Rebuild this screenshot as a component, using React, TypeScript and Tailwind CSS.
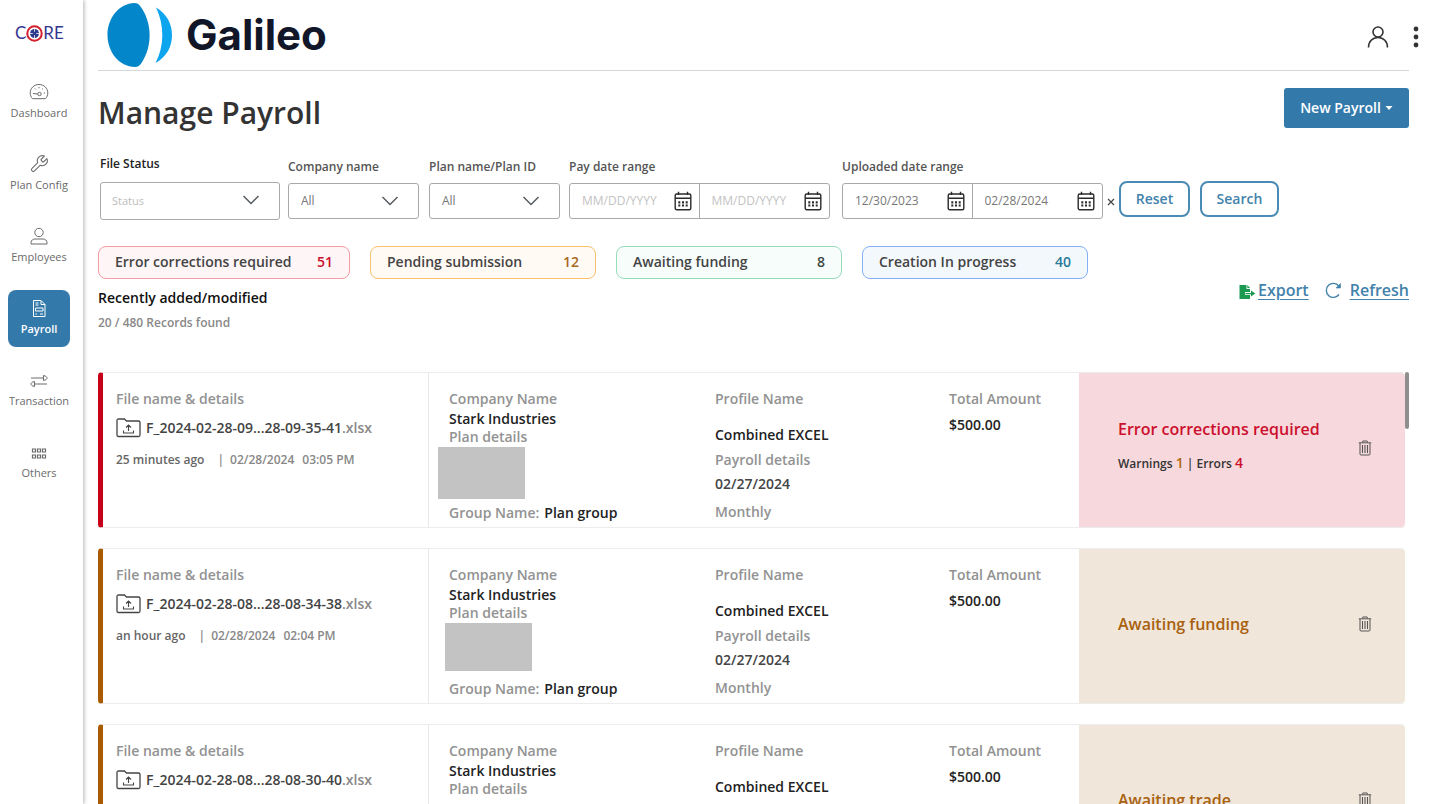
import React, { useState } from "react";
import type { ReactNode } from "react";

type IconProps = { className?: string };

function GalileoMark({ className }: IconProps) {
  return (
    <svg viewBox="0 0 66 66" className={className} aria-hidden="true">
      <path
        d="M27.5 1C30 1 32 2 33.500 4.500C45 20 46 44 34.500 61C32.500 63.500 31 65 28 65C12 64.500 .5 50 .5 33C.5 16 12 1.500 27.500 1Z"
        fill="#0386ca"
      />
      <path
        d="M49 5.500C60 12 65 22 65 33C65 44.500 60 54.500 48.500 61C57.500 44.500 57.500 23 49 5.500Z"
        fill="#0ea5ef"
      />
    </svg>
  );
}

function CoreTarget({ className }: IconProps) {
  return (
    <svg viewBox="0 0 16 16" className={className} aria-hidden="true">
      <circle cx="8" cy="8" r="6.8" fill="#fff" stroke="#d3202c" strokeWidth="1.900" />
      <circle cx="8" cy="8" r="4.200" fill="#2f3a8c" />
      <path d="M8 3.300V12.700M3.300 8H12.700" stroke="#fff" strokeWidth=".7" />
      <circle cx="8" cy="8" r="1.600" fill="#2f3a8c" />
    </svg>
  );
}

function GaugeIcon({ className }: IconProps) {
  return (
    <svg viewBox="0 0 20 20" className={className} fill="none" stroke="currentColor" aria-hidden="true">
      <path d="M3.500 16.700C2 15.200 1.200 13 1.200 11C1.200 6.200 5 2.500 10 2.500C15 2.500 18.800 6.200 18.800 11C18.800 13 18 15.200 16.500 16.700Z" />
      <circle cx="10.500" cy="12" r="1.700" />
      <path d="M4 11.500L8.800 12" strokeWidth="1.200" />
      <path d="M10 5V6.300M6 6.500L6.900 7.400M14 6.500L13.100 7.400M16 11H14.800" />
    </svg>
  );
}

function WrenchIcon({ className }: IconProps) {
  return (
    <svg viewBox="0 0 24 24" className={className} fill="none" stroke="currentColor" strokeWidth="1.300" strokeLinejoin="round" aria-hidden="true">
      <path d="M14.700 6.300a1 1 0 0 0 0 1.400l1.600 1.600a1 1 0 0 0 1.400 0l3.770-3.770a6 6 0 0 1-7.940 7.940l-6.910 6.910a2.120 2.120 0 0 1-3-3l6.910-6.910a6 6 0 0 1 7.940-7.940z" />
    </svg>
  );
}

function PersonIcon({ className }: IconProps) {
  return (
    <svg viewBox="0 0 20 20" className={className} fill="none" stroke="currentColor" aria-hidden="true">
      <circle cx="10" cy="6.500" r="4.200" />
      <path d="M2 18V16.500C2 14.300 4 13 6 13H14C16 13 18 14.300 18 16.500V18Z" />
    </svg>
  );
}

function PayrollIcon({ className }: IconProps) {
  return (
    <svg viewBox="0 0 20 20" className={className} fill="none" stroke="currentColor" aria-hidden="true">
      <path d="M4.500 2.500H12L16 6.500V18.500H4.500Z" />
      <path d="M12 2.500V6.500H16M6.500 5H9.500M6.500 7H9.500M6.500 10H14V13H6.500ZM6.500 16H8M11 16H14" />
    </svg>
  );
}

function TransferIcon({ className }: IconProps) {
  return (
    <svg viewBox="0 0 20 20" className={className} fill="none" stroke="currentColor" aria-hidden="true">
      <path d="M2 8H14.500M14.500 5.500V10.500C17 10 18 9 18 8C18 7 17 6 14.500 5.500ZM18 14H5.500M5.500 11.500V16.500C3 16 2 15 2 14C2 13 3 12 5.500 11.500Z" />
    </svg>
  );
}

function GridIcon({ className }: IconProps) {
  return (
    <svg viewBox="0 0 20 20" className={className} fill="none" stroke="currentColor" strokeWidth="1.200" aria-hidden="true">
      <path d="M3.500 7H6.500V10H3.500ZM8.500 7H11.500V10H8.500ZM13.500 7H16.500V10H13.500ZM3.500 13H6.500V16H3.500ZM8.500 13H11.500V16H8.500ZM13.500 13H16.500V16H13.500Z" />
    </svg>
  );
}

function ChevronIcon({ className }: IconProps) {
  return (
    <svg viewBox="0 0 18 18" className={className} fill="none" stroke="#555b60" strokeWidth="1.500" aria-hidden="true">
      <path d="M1.500 5L9 12.500L16.500 5" />
    </svg>
  );
}

function CalendarIcon({ className }: IconProps) {
  return (
    <svg viewBox="0 0 18 20" className={className} fill="none" stroke="#2b2b2b" strokeWidth="1.400" aria-hidden="true">
      <rect x="1.200" y="3" width="15.600" height="15.800" rx="1.500" />
      <path d="M1.200 7.300H16.800M4.500 .8V4M13.500 .8V4" />
      <path d="M4.300 11.300H6.300M8 11.300H10M11.700 11.300H13.700M4.300 14.500H6.300M8 14.500H10M11.700 14.500H13.700" strokeWidth="2.200" />
    </svg>
  );
}

function FolderUploadIcon({ className }: IconProps) {
  return (
    <svg viewBox="0 0 25 20" className={className} fill="none" stroke="#444" strokeWidth="1.300" aria-hidden="true">
      <path d="M1 17V2.500C1 1.500 1.500 1 2.500 1H8.500L10.500 3H22.500C23.500 3 24 3.500 24 4.500V17C24 18 23.500 18.500 22.500 18.500H2.500C1.500 18.500 1 18 1 17Z" />
      <path d="M12.500 13V7.500M10 9.500L12.500 7L15 9.500M7.500 12.500V15H17.500V12.500" strokeWidth="1.100" />
    </svg>
  );
}

function TrashIcon({ className }: IconProps) {
  return (
    <svg viewBox="0 0 14 16" className={className} fill="none" stroke="#555" aria-hidden="true">
      <path d="M.8 2.800H13.200M4.800 2.500V1H9.200V2.500M2 3V14C2 14.700 2.400 15 3 15H11C11.600 15 12 14.700 12 14V3" />
      <path d="M4.500 5V13M7 5V13M9.500 5V13" strokeWidth="1.100" />
    </svg>
  );
}

function ExportIcon({ className }: IconProps) {
  return (
    <svg viewBox="0 0 17 16" className={className} aria-hidden="true">
      <path d="M.5 1H7.500V5H11V8H6V11H11V15H.5Z" fill="#1d9a52" />
      <path d="M8.300 1L11 4H8.300Z" fill="#1d9a52" />
      <path d="M6.500 9H12V6.500L16.300 9.600L12 12.500V10.200H6.500Z" fill="#1d9a52" />
    </svg>
  );
}

function RefreshIcon({ className }: IconProps) {
  return (
    <svg viewBox="0 0 17 17" className={className} fill="none" stroke="currentColor" strokeWidth="1.400" aria-hidden="true">
      <path d="M14 12.500A7 7 0 1 1 13.800 4" />
      <path d="M15.500 1.500V6H11Z" fill="currentColor" strokeWidth=".6" />
    </svg>
  );
}

const navItems = [
  { label: "Dashboard", Icon: GaugeIcon },
  { label: "Plan Config", Icon: WrenchIcon },
  { label: "Employees", Icon: PersonIcon },
  { label: "Payroll", Icon: PayrollIcon },
  { label: "Transaction", Icon: TransferIcon },
  { label: "Others", Icon: GridIcon },
];

function Sidebar() {
  return (
    <aside className="z-10 flex w-[83px] shrink-0 flex-col bg-white shadow-[1px_0_4px_rgba(0,0,0,0.3)]">
      <div className="flex h-[66px] items-center pl-[15px] font-[Lato,sans-serif] text-[17px] text-[#35378f]">
        <span>C</span>
        <CoreTarget className="size-[17px]" />
        <span>RE</span>
      </div>
      <nav className="mt-2 flex flex-col gap-[15px] px-2">
        {navItems.map(({ label, Icon }) => (
          <a
            key={label}
            href="#"
            className={
              label === "Payroll"
                ? "flex h-[57px] w-[62px] flex-col items-center gap-px rounded-lg bg-[#337aab] pt-2 text-[11px] leading-5 font-semibold text-white"
                : "flex h-[57px] w-[62px] flex-col items-center gap-px pt-2 text-[11px] leading-5 font-medium whitespace-nowrap text-[#6b6b6b]"
            }
          >
            <Icon className="size-5 shrink-0" />
            {label}
          </a>
        ))}
      </nav>
    </aside>
  );
}

function Header() {
  return (
    <header className="mr-[21px] ml-[15px] flex h-[71px] shrink-0 items-center border-b border-[#d3d8d8]">
      <a href="#" className="flex items-center gap-[13px] pl-[9px] font-[Inter,sans-serif] text-[42px] leading-none font-bold text-[#111729]">
        <GalileoMark className="size-[66px]" />
        Galileo
      </a>
      <div className="ml-auto flex items-center gap-6">
        <button aria-label="Account">
          <svg viewBox="0 0 22 22" className="mt-1 size-[22px]" fill="none" stroke="#333" strokeWidth="1.600" aria-hidden="true">
            <circle cx="11" cy="6" r="5" />
            <path d="M1.500 21.500C1.500 15.500 5.500 11.500 11 11.500C16.500 11.500 20.500 15.500 20.500 21.500" />
          </svg>
        </button>
        <button aria-label="More options" className="-mr-[10px]">
          <svg viewBox="0 0 6 22" className="mt-1 h-[22px] w-[6px]" fill="#333" aria-hidden="true">
            <circle cx="3" cy="3" r="2.400" />
            <circle cx="3" cy="11" r="2.400" />
            <circle cx="3" cy="19" r="2.400" />
          </svg>
        </button>
      </div>
    </header>
  );
}

function SelectField({ id, label, option }: { id: string; label: string; option: string }) {
  const isStatus = option === "Status";
  return (
    <div className="flex flex-col">
      <label
        htmlFor={id}
        className={isStatus ? "mb-2 text-xs leading-5 font-semibold text-[#222]" : "mb-[6px] text-xs leading-5 font-semibold text-[#555]"}
      >
        {label}
      </label>
      <div className="relative">
        <select
          id={id}
          className={
            isStatus
              ? "block h-[38px] w-[180px] appearance-none rounded-[3px] border border-[#a9a9a9] bg-white pl-[11px] text-[11px] text-[#bdbdbd]"
              : "block h-9 w-[131px] appearance-none rounded-[3px] border border-[#a9a9a9] bg-white pl-3 text-xs text-[#777]"
          }
        >
          <option>{option}</option>
        </select>
        <ChevronIcon className="pointer-events-none absolute top-[9px] right-5 size-[18px]" />
      </div>
    </div>
  );
}

function DateInput({ id, value, label }: { id: string; value: string; label?: string }) {
  const [date, setDate] = useState(value);
  return (
    <div className="flex w-1/2 items-center pr-[7px] pl-3">
      <input
        id={id}
        aria-label={label}
        value={date}
        onChange={(e) => setDate(e.target.value)}
        placeholder="MM/DD/YYYY"
        className="w-0 min-w-0 flex-1 text-xs text-[#777] outline-none placeholder:text-[#c3c3c3]"
      />
      <CalendarIcon className="h-5 w-[18px] shrink-0" />
    </div>
  );
}

function DateRange({ id, label, from, to }: { id: string; label: string; from: string; to: string }) {
  return (
    <div className="flex flex-col">
      <label htmlFor={id} className="mb-[6px] text-xs leading-5 font-semibold text-[#555]">
        {label}
      </label>
      <div className="flex h-9 w-[261px] divide-x divide-[#a9a9a9] rounded-[3px] border border-[#a9a9a9]">
        <DateInput id={id} value={from} />
        <DateInput id={id + "-to"} value={to} label={label + " end"} />
      </div>
    </div>
  );
}

function Filters() {
  return (
    <form className="mt-5 flex flex-wrap items-end pl-[2px]" onSubmit={(e) => e.preventDefault()}>
      <div className="mr-2">
        <SelectField id="file-status" label="File Status" option="Status" />
      </div>
      <div className="mr-[10px] mb-px">
        <SelectField id="company" label="Company name" option="All" />
      </div>
      <div className="mr-[9px] mb-px">
        <SelectField id="plan" label="Plan name/Plan ID" option="All" />
      </div>
      <div className="mr-3 mb-px">
        <DateRange id="pay-date" label="Pay date range" from="" to="" />
      </div>
      <div className="mb-px">
        <DateRange id="uploaded-date" label="Uploaded date range" from="12/30/2023" to="02/28/2024" />
      </div>
      <button type="button" aria-label="Clear dates" className="flex h-9 w-4 items-center justify-center">
        <svg viewBox="0 0 8 8" className="size-2" stroke="#444" strokeWidth="1.200" aria-hidden="true">
          <path d="M1 1L7 7M7 1L1 7" />
        </svg>
      </button>
      <button type="button" className="mb-[3px] h-9 w-[71px] rounded-lg border-2 border-[#4a8bb5] text-sm font-semibold text-[#4282ab]">
        Reset
      </button>
      <button type="submit" className="mb-[3px] ml-[10px] h-9 w-[79px] rounded-lg border-2 border-[#4a8bb5] text-sm font-semibold text-[#4282ab]">
        Search
      </button>
    </form>
  );
}

const summary = [
  { label: "Error corrections required", count: 51, box: "w-[252px] border-[#f29ca4] bg-[#fdf5f6]", num: "text-[#c8102e]" },
  { label: "Pending submission", count: 12, box: "w-[226px] border-[#f8c06c] bg-[#fffaf4]", num: "text-[#a8691e]" },
  { label: "Awaiting funding", count: 8, box: "w-[226px] border-[#96dcbc] bg-[#f6fdfa]", num: "text-[#3b4a45]" },
  { label: "Creation In progress", count: 40, box: "w-[226px] border-[#84aff5] bg-[#f3f8fd]", num: "text-[#2b7a99]" },
];

type Payroll = {
  file: string;
  ago: string;
  date: string;
  time: string;
  status: string;
  warnings?: number;
  errors?: number;
  logo: string;
};

const payrolls: Payroll[] = [
  {
    file: "F_2024-02-28-09...28-09-35-41",
    ago: "25 minutes ago",
    date: "02/28/2024",
    time: "03:05 PM",
    status: "Error corrections required",
    warnings: 1,
    errors: 4,
    logo: "-ml-[11px] mb-1 h-[52px] bg-[#c3c3c3]",
  },
  {
    file: "F_2024-02-28-08...28-08-34-38",
    ago: "an hour ago",
    date: "02/28/2024",
    time: "02:04 PM",
    status: "Awaiting funding",
    logo: "-ml-1 mb-2 h-12 bg-[#c3c3c3]",
  },
  {
    file: "F_2024-02-28-08...28-08-30-40",
    ago: "an hour ago",
    date: "02/28/2024",
    time: "02:00 PM",
    status: "Awaiting trade",
    logo: "mb-2 h-12",
  },
];

function Muted({ children }: { children: ReactNode }) {
  return <div className="leading-5 text-[#929292]">{children}</div>;
}

function PayrollCard({ item }: { item: Payroll }) {
  const isError = item.errors !== undefined;
  return (
    <article
      className={
        isError
          ? "grid min-h-[156px] shrink-0 grid-cols-[326fr_266fr_234fr_150fr_326fr] rounded border-y border-l-[5px] border-y-[#ececec] border-l-[#c60018] text-sm font-semibold"
          : "grid min-h-[156px] shrink-0 grid-cols-[326fr_266fr_234fr_150fr_326fr] rounded border-y border-l-[5px] border-y-[#ececec] border-l-[#a85b00] text-sm font-semibold"
      }
    >
      <div className="border-r border-[#e8e8e8] pt-4 pl-[13px]">
        <Muted>File name &amp; details</Muted>
        <div className="mt-2 flex items-center leading-[22px] text-[#444]">
          <FolderUploadIcon className="mr-[5px] h-5 w-[25px]" />
          <span>{item.file}</span>
          <span className="text-[#888]">.xlsx</span>
        </div>
        <div className="mt-[11px] flex text-xs leading-5 text-[#888]">
          <span className="mr-[13px] text-[#666]">{item.ago}</span>
          <span className="mr-[6px]">|</span>
          <span className="mr-2">{item.date}</span>
          <span>{item.time}</span>
        </div>
      </div>
      <div className="pt-4 pl-5">
        <Muted>Company Name</Muted>
        <div className="leading-5 text-[#222]">Stark Industries</div>
        <div className="leading-4 text-[#929292]">Plan details</div>
        <div className={`mt-[2px] w-[87px] ${item.logo}`} />
        <div className="flex gap-[5px] leading-5 text-[#929292]">
          Group Name: <span className="text-[#222]">Plan group</span>
        </div>
      </div>
      <div className="pt-4 pl-5">
        <Muted>Profile Name</Muted>
        <div className="mt-4 leading-5 text-[#222]">Combined EXCEL</div>
        <div className="mt-[5px] leading-5 text-[#929292]">Payroll details</div>
        <div className="mt-1 leading-5 text-[#444]">02/27/2024</div>
        <div className="mt-2 leading-5 text-[#929292]">Monthly</div>
      </div>
      <div className="pt-4 pl-5">
        <Muted>Total Amount</Muted>
        <div className="mt-[6px] leading-5 text-[#222]">$500.00</div>
      </div>
      <div
        className={
          isError
            ? "flex items-center justify-between rounded-r bg-[#f7d9dd] pr-[33px] pb-1 pl-[39px]"
            : "flex items-center justify-between rounded-r bg-[#f1e6da] pr-[33px] pb-1 pl-[39px]"
        }
      >
        <div className={isError ? "pb-[6px]" : ""}>
          <div className={isError ? "text-base leading-6 text-[#cc0f2c]" : "text-base leading-6 text-[#a8610f]"}>{item.status}</div>
          {isError && (
            <div className="mt-3 text-xs leading-5 text-[#333]">
              Warnings <span className="text-sm text-[#b06a12]">{item.warnings}</span> | Errors{" "}
              <span className="text-sm text-[#cc0f2c]">{item.errors}</span>
            </div>
          )}
        </div>
        <button aria-label="Delete payroll">
          <TrashIcon className="h-4 w-[14px]" />
        </button>
      </div>
    </article>
  );
}

export default function App() {
  return (
    <div className="flex h-screen overflow-hidden bg-white font-['Open_Sans',sans-serif]">
      <Sidebar />
      <div className="flex min-w-0 flex-1 flex-col">
        <Header />
        <main className="flex min-h-0 flex-1 flex-col pt-[17px] pr-[21px] pl-[15px]">
          <div className="flex items-start justify-between">
            <h1 className="pt-1 text-[30px] leading-[42px] font-semibold text-[#333]">Manage Payroll</h1>
            <button className="flex h-10 w-[125px] items-center justify-center gap-1 rounded-[3px] bg-[#337aab] text-sm font-semibold text-white">
              New Payroll
              <svg viewBox="0 0 8 4" className="h-1 w-2" fill="#fff" aria-hidden="true">
                <path d="M.5 0H7.500L4 4Z" />
              </svg>
            </button>
          </div>

          <Filters />

          <div className="mt-[26px] flex flex-wrap gap-5">
            {summary.map((s) => (
              <button
                key={s.label}
                className={`flex h-[33px] items-center justify-between rounded-lg border px-4 pb-[2px] text-sm font-semibold text-[#444] ${s.box}`}
              >
                {s.label}
                <span className={s.num}>{s.count}</span>
              </button>
            ))}
          </div>

          <div className="flex items-start justify-between">
            <div className="pt-[9px]">
              <h2 className="text-sm leading-5 font-semibold text-[#111]">Recently added/modified</h2>
              <p className="mt-[5px] text-xs leading-5 font-semibold text-[#888]">20 / 480 Records found</p>
            </div>
            <div className="flex items-center text-base leading-[22px] font-semibold text-[#4282ab]">
              <ExportIcon className="mt-1 mr-[2px] h-4 w-[17px]" />
              <a href="#" className="mr-4 underline underline-offset-3">
                Export
              </a>
              <RefreshIcon className="mr-2 size-[17px]" />
              <a href="#" className="underline underline-offset-3">
                Refresh
              </a>
            </div>
          </div>

          <div className="mt-[39px] flex min-h-0 flex-1">
            <div className="flex min-w-0 flex-1 flex-col gap-5 overflow-y-auto [scrollbar-width:none]">
              {payrolls.map((p) => (
                <PayrollCard key={p.file} item={p} />
              ))}
            </div>
            <div className="h-[57px] w-1 rounded-full bg-[#8f8f8f]" />
          </div>
        </main>
      </div>
    </div>
  );
}
